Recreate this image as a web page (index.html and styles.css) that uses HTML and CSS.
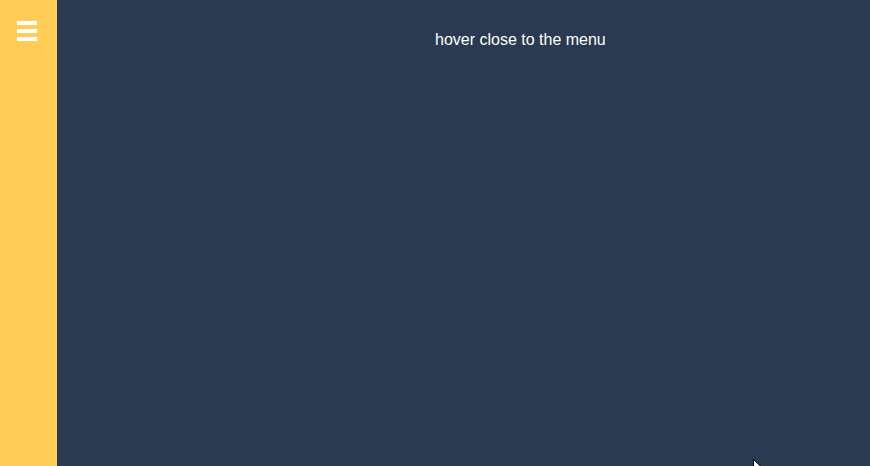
FILE: index.html
```html
<!DOCTYPE html>
<html>
<head>
<meta charset="utf-8">
<link rel="stylesheet" href="styles.css">
</head>
<body>
<div class="layout">
  <nav class="sidebar">
    <div class="burger"><span></span><span></span><span></span></div>
  </nav>
  <main class="content">
    <p class="hint">hover close to the menu</p>
  </main>
</div>
<svg class="cursor" width="12" height="18" viewBox="0 0 12 18"><path d="M0.5 0.5 L0.5 15 L4 11.5 L6.5 17 L8.5 16 L6 10.5 L11 10.5 Z" fill="#ffffff" stroke="#000000" stroke-width="1"/></svg>
</body>
</html>
```
FILE: styles.css
```css
html, body {
  margin: 0;
  padding: 0;
  height: 100%;
  background: #293a51;
  font-family: "Liberation Sans", Arial, sans-serif;
  overflow: hidden;
}
body {
  position: relative;
}
.layout {
  display: flex;
  height: 100%;
}
.sidebar {
  width: 57px;
  flex: none;
  background: #ffcd56;
  padding-top: 21px;
  box-sizing: border-box;
}
.burger {
  display: flex;
  flex-direction: column;
  gap: 4px;
  margin-left: 17px;
  width: 20px;
}
.burger span {
  display: block;
  height: 4px;
  background: #ffffff;
}
.content {
  flex: 1;
  padding-left: 378px;
  padding-top: 30px;
}
.hint {
  margin: 0;
  color: #ffffff;
  font-size: 16px;
  line-height: 19px;
}
.cursor {
  position: absolute;
  left: 753px;
  top: 459px;
}
```
